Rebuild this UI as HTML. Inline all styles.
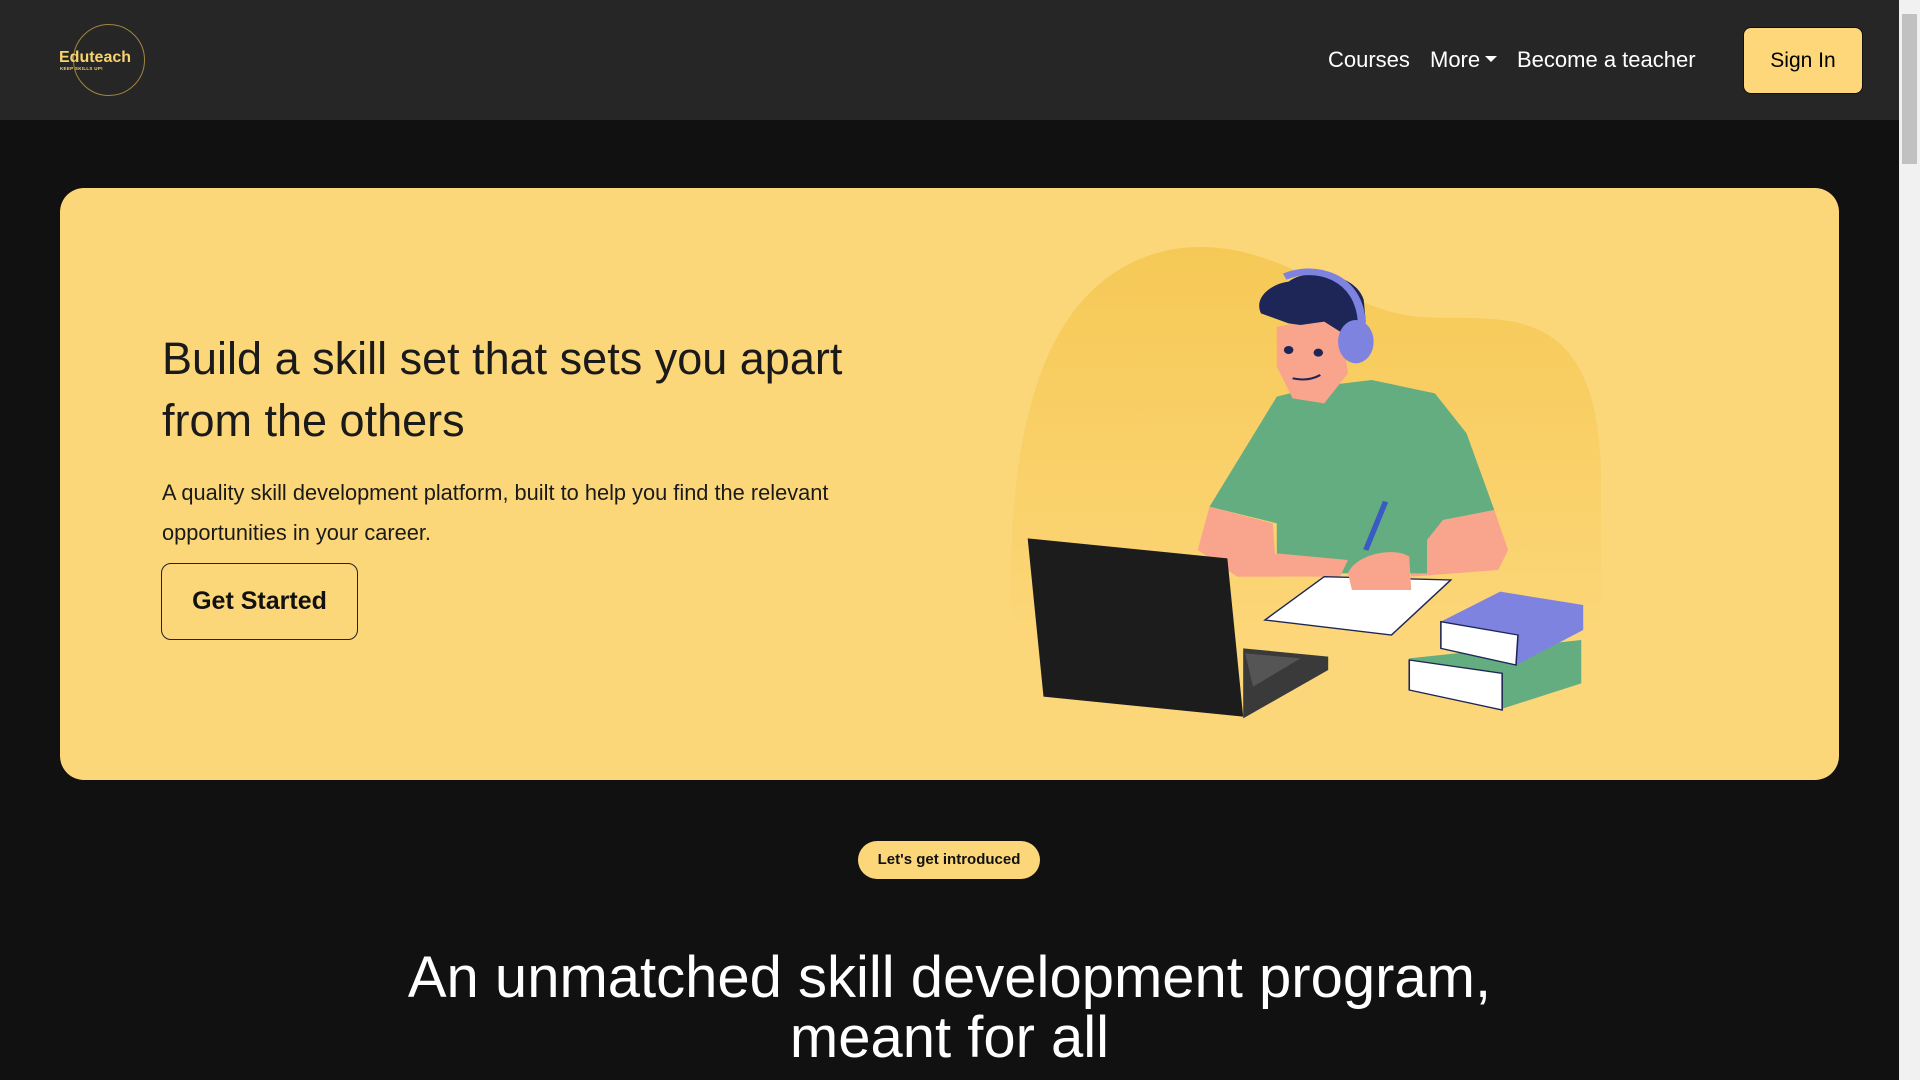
<!DOCTYPE html>
<html><head><meta charset="utf-8"><style>
*{margin:0;padding:0;box-sizing:border-box}
html,body{width:1920px;height:1080px;overflow:hidden;background:#111;font-family:"Liberation Sans",sans-serif}
.nav{position:absolute;left:0;top:0;width:1899px;height:120px;background:#262626}
.logo{position:absolute;left:73px;top:24px;width:72px;height:72px;border:1.5px solid #a08640;border-radius:50%}
.lt{position:absolute;left:59px;top:49px;color:#f7d36e;font-weight:bold;font-size:16px}
.ls{position:absolute;left:60px;top:66px;color:#f7d36e;font-weight:bold;font-size:4.5px;letter-spacing:.3px}
.nl{position:absolute;top:47px;color:#fff;font-size:22px}
.caret{display:inline-block;width:0;height:0;border-left:6px solid transparent;border-right:6px solid transparent;border-top:6px solid #fff;vertical-align:middle;margin-left:5px;margin-top:-4px}
.btn{position:absolute;left:1743px;top:27px;width:120px;height:67px;background:#fdd77a;border:1px solid #111;border-radius:8px;font-size:21px;text-align:center;line-height:65px;color:#000;font-weight:500}
.sb{position:absolute;left:1899px;top:0;width:21px;height:1080px;background:#f1f1f1}
.thumb{position:absolute;left:1902px;top:14px;width:15px;height:150px;background:#c1c1c1}
.hero{position:absolute;left:60px;top:188px;width:1779px;height:592px;background:#fcd77a;border-radius:24px;overflow:hidden}
h1{position:absolute;left:162px;top:328px;font-size:45px;line-height:62px;font-weight:normal;color:#1a1a1a;width:820px}
p.d{position:absolute;left:162px;top:473px;font-size:21.8px;line-height:40px;color:#1a1a1a;width:800px}
.gs{position:absolute;left:161px;top:563px;width:197px;height:77px;border:1.5px solid #222;border-radius:10px;font-size:25px;font-weight:bold;text-align:center;line-height:74px;color:#111}
.badge{position:absolute;left:858px;top:841px;width:182px;height:38px;background:#fcd77a;border-radius:19px;font-size:15px;font-weight:bold;text-align:center;line-height:38px;color:#111}
h2{position:absolute;left:0;width:1899px;top:948px;text-align:center;color:#fff;font-size:58px;line-height:60px;font-weight:normal}
</style></head><body>
<div class="nav">
<div class="logo"></div><div class="lt">Eduteach</div><div class="ls">KEEP SKILLS UP!</div>
<div class="nl" style="left:1328px">Courses</div>
<div class="nl" style="left:1430px">More<span class="caret"></span></div>
<div class="nl" style="left:1517px">Become a teacher</div>
<div class="btn">Sign In</div>
</div>
<div class="hero"></div>
<svg style="position:absolute;left:1000px;top:240px" width="620" height="490" viewBox="0 0 1568 1470" preserveAspectRatio="none">
<defs><linearGradient id="g" x1="0" y1="0" x2="0" y2="1"><stop offset="0" stop-color="#f6c956"/><stop offset="1" stop-color="#fcd77a"/></linearGradient></defs>
<path d="M30 1250 C10 700 60 100 450 25 C700 -10 850 200 1050 230 C1250 250 1510 150 1520 700 L1520 1250 Z" fill="url(#g)"/>
<path d="M500 930 L530 800 L690 850 L700 1010 L600 1010 Z" fill="#f9a48d"/>
<path d="M1120 840 L1250 810 L1285 930 L1260 990 L1040 1010 L1030 930 Z" fill="#f9a48d"/>
<path d="M530 800 L700 470 L800 440 L940 420 L1100 460 L1180 580 L1250 810 L1120 840 L1080 900 L1080 1000 L700 1000 L700 850 Z" fill="#64ad80"/>
<path d="M600 1010 L860 1010 L880 960 L700 940 Z" fill="#f9a48d"/>
<path d="M700 260 L860 230 L880 400 L820 490 L740 475 L700 380 Z" fill="#f9a48d"/>
<path d="M660 220 C640 170 690 130 730 125 C780 80 900 100 920 180 L925 245 L860 275 L820 245 L760 255 L730 250 Z" fill="#1e2657"/>
<path d="M720 110 C800 70 910 110 915 250" fill="none" stroke="#7f83e0" stroke-width="20"/>
<ellipse cx="900" cy="305" rx="45" ry="65" fill="#7f83e0"/>
<circle cx="730" cy="330" r="12" fill="#1e2657"/><circle cx="805" cy="338" r="12" fill="#1e2657"/>
<path d="M740 415 Q780 425 810 405" stroke="#1e2657" stroke-width="6" fill="none"/>
<path d="M975 785 L925 930" stroke="#3b5bc4" stroke-width="14"/>
<path d="M670 1140 L820 1010 L1140 1020 L990 1185 Z" fill="#fff" stroke="#1e2657" stroke-width="4"/>
<path d="M880 1000 C900 940 1000 920 1035 950 L1040 1050 L890 1050 Z" fill="#f9a48d"/>
<path d="M1035 1255 L1470 1200 L1470 1330 L1260 1410 L1035 1340 Z" fill="#64ad80"/>
<path d="M1035 1260 L1270 1300 L1270 1410 L1035 1350 Z" fill="#fff" stroke="#1e2657" stroke-width="4"/>
<path d="M1115 1145 L1265 1055 L1475 1095 L1475 1170 L1305 1275 L1115 1220 Z" fill="#7f83e0"/>
<path d="M1115 1145 L1310 1185 L1305 1275 L1115 1225 Z" fill="#fff" stroke="#1e2657" stroke-width="4"/>
<path d="M70 895 L575 955 L615 1430 L110 1370 Z" fill="#1c1c1c"/>
<path d="M615 1225 L830 1250 L830 1290 L615 1435 Z" fill="#3a3a3a"/>
<path d="M620 1240 L760 1255 L640 1340 Z" fill="#555"/>
</svg>
<h1>Build a skill set that sets you apart<br>from the others</h1>
<p class="d">A quality skill development platform, built to help you find the relevant<br>opportunities in your career.</p>
<div class="gs">Get Started</div>
<div class="badge">Let's get introduced</div>
<h2>An unmatched skill development program,<br>meant for all</h2>
<div class="sb"></div><div class="thumb"></div>
</body></html>
